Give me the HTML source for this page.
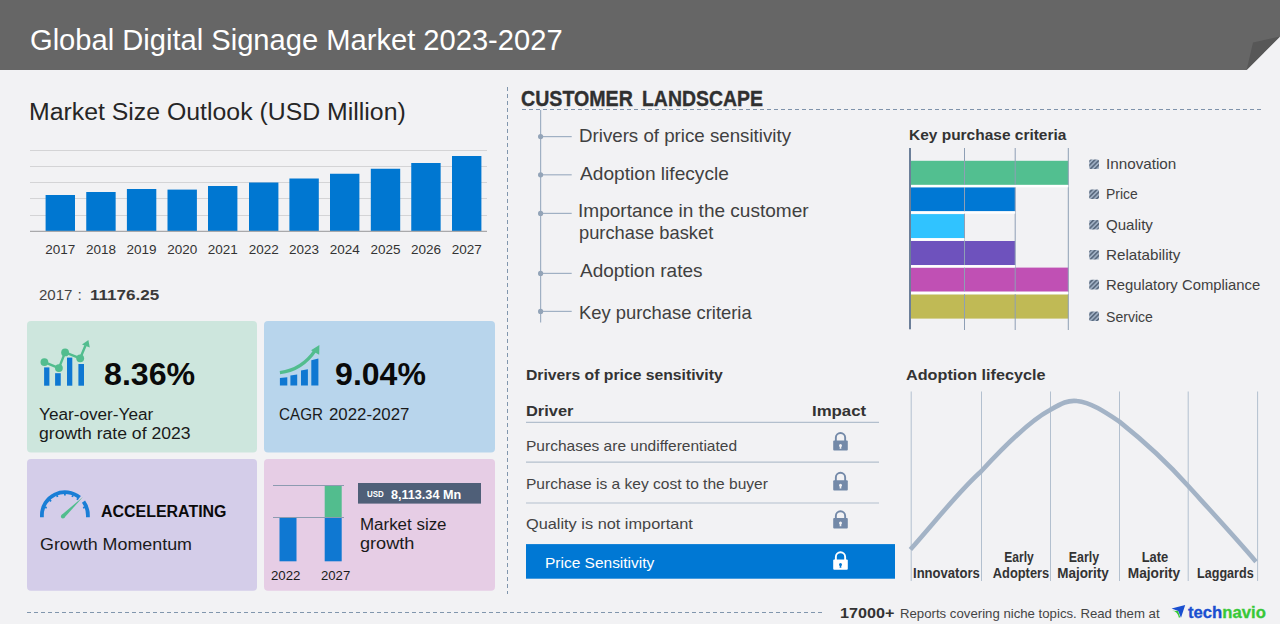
<!DOCTYPE html>
<html><head><meta charset="utf-8"><style>
html,body{margin:0;padding:0;}
body{width:1280px;height:624px;overflow:hidden;position:relative;background:#f2f2f4;font-family:"Liberation Sans",sans-serif;}
.t{position:absolute;white-space:nowrap;}
.a{position:absolute;}
</style></head><body>
<svg class="a" style="left:0;top:0" width="1280" height="624" viewBox="0 0 1280 624"><rect x="0" y="0" width="1280" height="70" fill="#666666"/>
<polygon points="1246.6,70 1280,36.5 1280,70" fill="#f2f2f4"/>
<polygon points="1246.6,70 1253,42.5 1280,36.5" fill="#575757"/>
<line x1="30" y1="150.5" x2="487" y2="150.5" stroke="#d4d4d6" stroke-width="1"/>
<line x1="30" y1="166.5" x2="487" y2="166.5" stroke="#d4d4d6" stroke-width="1"/>
<line x1="30" y1="182.5" x2="487" y2="182.5" stroke="#d4d4d6" stroke-width="1"/>
<line x1="30" y1="198.5" x2="487" y2="198.5" stroke="#d4d4d6" stroke-width="1"/>
<line x1="30" y1="215.5" x2="487" y2="215.5" stroke="#d4d4d6" stroke-width="1"/>
<rect x="45.6" y="195" width="29.4" height="36" fill="#0077d1"/>
<rect x="86.25" y="192" width="29.4" height="39" fill="#0077d1"/>
<rect x="126.9" y="189" width="29.4" height="42" fill="#0077d1"/>
<rect x="167.5" y="189.6" width="29.4" height="41.400000000000006" fill="#0077d1"/>
<rect x="208" y="186" width="29.4" height="45" fill="#0077d1"/>
<rect x="249" y="182.5" width="29.4" height="48.5" fill="#0077d1"/>
<rect x="289.4" y="178.5" width="29.4" height="52.5" fill="#0077d1"/>
<rect x="330" y="173.75" width="29.4" height="57.25" fill="#0077d1"/>
<rect x="370.8" y="168.75" width="29.4" height="62.25" fill="#0077d1"/>
<rect x="411.25" y="163" width="29.4" height="68" fill="#0077d1"/>
<rect x="452" y="156" width="29.4" height="75" fill="#0077d1"/>
<line x1="30" y1="231.3" x2="487" y2="231.3" stroke="#a9a9ab" stroke-width="1.2"/>
<rect x="27" y="321" width="230" height="131.6" rx="4" fill="#cde6dd"/>
<rect x="264" y="321" width="231" height="131.6" rx="4" fill="#b8d5ec"/>
<rect x="27" y="459" width="230" height="131.7" rx="4" fill="#d4cde9"/>
<rect x="264" y="459" width="231" height="131.7" rx="4" fill="#e6cde5"/>
<rect x="44.1" y="367.4" width="5.30" height="18.30" fill="#0f78d2"/>
<rect x="55.1" y="373.2" width="5.65" height="12.50" fill="#0f78d2"/>
<rect x="67" y="357.6" width="5.30" height="28.10" fill="#0f78d2"/>
<rect x="78.4" y="364" width="5.60" height="21.70" fill="#0f78d2"/>
<polyline points="44.4,362.1 58.9,368.1 65.1,352.4 80.2,358.3 85.5,345.5" fill="none" stroke="#52bd8e" stroke-width="2.4" stroke-linejoin="round"/>
<circle cx="44.4" cy="362.1" r="3.9" fill="#52bd8e"/>
<circle cx="58.9" cy="368.1" r="3.9" fill="#52bd8e"/>
<circle cx="65.1" cy="352.4" r="3.9" fill="#52bd8e"/>
<circle cx="80.2" cy="358.3" r="3.9" fill="#52bd8e"/>
<polygon points="88.4,340 89.8,347.5 82,344.6" fill="#52bd8e"/>
<polygon points="279.9,377.9 287.3,377.3 287.3,385.6 279.9,385.6" fill="#0f78d2"/>
<polygon points="290.4,375.6 297.2,374.5 297.2,385.6 290.4,385.6" fill="#0f78d2"/>
<polygon points="301,370.6 307.9,369.2 307.9,385.6 301,385.6" fill="#0f78d2"/>
<polygon points="311.3,360.2 318.4,358.4 318.4,385.6 311.3,385.6" fill="#0f78d2"/>
<path d="M279.9,372.6 Q302,370 315.5,350" fill="none" stroke="#52bd8e" stroke-width="3.2"/>
<polygon points="319.4,345 319.2,354.8 311,350.3" fill="#52bd8e"/>
<path d="M41.90,517.3 L41.90,515.20 A23.0,23.0 0 0 1 79.68,497.58" fill="none" stroke="#1a7ed6" stroke-width="3.8"/>
<path d="M83.51,501.68 A23.0,23.0 0 0 1 87.90,515.20 L87.90,517.3" fill="none" stroke="#1a7ed6" stroke-width="3.8"/>
<line x1="44.97" y1="507.15" x2="46.73" y2="507.86" stroke="#1a7ed6" stroke-width="1.8"/>
<line x1="49.70" y1="500.00" x2="51.04" y2="501.34" stroke="#1a7ed6" stroke-width="1.8"/>
<line x1="56.85" y1="495.27" x2="57.56" y2="497.03" stroke="#1a7ed6" stroke-width="1.8"/>
<line x1="64.90" y1="493.70" x2="64.90" y2="495.60" stroke="#1a7ed6" stroke-width="1.8"/>
<line x1="72.95" y1="495.27" x2="72.24" y2="497.03" stroke="#1a7ed6" stroke-width="1.8"/>
<line x1="78.14" y1="498.26" x2="76.97" y2="499.75" stroke="#1a7ed6" stroke-width="1.8"/>
<line x1="84.83" y1="507.15" x2="83.07" y2="507.86" stroke="#1a7ed6" stroke-width="1.8"/>
<path d="M64.29,517.84 L82.9,497.0 L61.51,514.96 Z" fill="#52bd8e"/>
<circle cx="62.9" cy="516.4" r="2.00" fill="#52bd8e"/>
<rect x="279.5" y="517.8" width="17" height="43.5" fill="#0f78d2"/>
<rect x="324.7" y="485.3" width="17" height="32.5" fill="#52bd8e"/>
<rect x="324.7" y="517.8" width="17" height="43.5" fill="#0f78d2"/>
<line x1="273" y1="485.5" x2="344" y2="485.5" stroke="#8c9bb0" stroke-width="1"/>
<line x1="273" y1="517.5" x2="344" y2="517.5" stroke="#8c9bb0" stroke-width="1"/>
<rect x="358" y="483" width="123" height="20.6" fill="#4f5f78"/>
<line x1="507.5" y1="87" x2="507.5" y2="594" stroke="#8196ad" stroke-width="1" stroke-dasharray="4,3"/>
<line x1="27" y1="612.5" x2="823" y2="612.5" stroke="#8196ad" stroke-width="1" stroke-dasharray="4,3"/>
<line x1="522" y1="109.5" x2="1262" y2="109.5" stroke="#7f93ab" stroke-width="1.2" stroke-dasharray="4,3"/>
<line x1="540.6" y1="110" x2="540.6" y2="322.6" stroke="#a0b0c3" stroke-width="1.2"/>
<line x1="540.6" y1="136.6" x2="571.7" y2="136.6" stroke="#a0b0c3" stroke-width="1.2"/>
<circle cx="540.6" cy="136.6" r="2.6" fill="#93a4b8"/>
<line x1="540.6" y1="174.8" x2="571.7" y2="174.8" stroke="#a0b0c3" stroke-width="1.2"/>
<circle cx="540.6" cy="174.8" r="2.6" fill="#93a4b8"/>
<line x1="540.6" y1="213.4" x2="571.7" y2="213.4" stroke="#a0b0c3" stroke-width="1.2"/>
<circle cx="540.6" cy="213.4" r="2.6" fill="#93a4b8"/>
<line x1="540.6" y1="273.4" x2="571.7" y2="273.4" stroke="#a0b0c3" stroke-width="1.2"/>
<circle cx="540.6" cy="273.4" r="2.6" fill="#93a4b8"/>
<line x1="540.6" y1="311.4" x2="571.7" y2="311.4" stroke="#a0b0c3" stroke-width="1.2"/>
<circle cx="540.6" cy="311.4" r="2.6" fill="#93a4b8"/>
<rect x="910" y="160.8" width="158.3" height="24.1" fill="#52bf90"/>
<rect x="910" y="187.2" width="105.2" height="24.1" fill="#0078d4"/>
<rect x="910" y="214.1" width="54.5" height="24.1" fill="#30c3ff"/>
<rect x="910" y="241" width="105.2" height="24.1" fill="#6e52bd"/>
<rect x="910" y="267.6" width="158.3" height="24.1" fill="#c050b4"/>
<rect x="910" y="294.5" width="158.3" height="24.1" fill="#c0ba55"/>
<line x1="964.5" y1="148" x2="964.5" y2="330" stroke="#8e9fb5" stroke-width="1"/>
<line x1="1015.2" y1="148" x2="1015.2" y2="330" stroke="#8e9fb5" stroke-width="1"/>
<line x1="1068.3" y1="148" x2="1068.3" y2="330" stroke="#8e9fb5" stroke-width="1"/>
<rect x="910" y="184.9" width="158.3" height="2.4" fill="#ffffff"/>
<rect x="910" y="211.3" width="105.2" height="2.4" fill="#ffffff"/>
<rect x="910" y="238.2" width="54.5" height="2.4" fill="#ffffff"/>
<rect x="910" y="265.1" width="105.2" height="2.4" fill="#ffffff"/>
<rect x="910" y="291.7" width="158.3" height="2.4" fill="#ffffff"/>
<rect x="909" y="148" width="2" height="181.3" fill="#6c7f99"/>
<defs><pattern id="hatch" patternUnits="userSpaceOnUse" width="3.2" height="3.2" patternTransform="rotate(45)"><rect width="3.2" height="3.2" fill="#a3b3c7"/><rect width="1.7" height="3.2" fill="#5b6b80"/></pattern></defs>
<rect x="1089.2" y="159.5" width="9.8" height="9.6" rx="1.5" fill="url(#hatch)"/>
<rect x="1089.2" y="189.5" width="9.8" height="9.6" rx="1.5" fill="url(#hatch)"/>
<rect x="1089.2" y="220" width="9.8" height="9.6" rx="1.5" fill="url(#hatch)"/>
<rect x="1089.2" y="250" width="9.8" height="9.6" rx="1.5" fill="url(#hatch)"/>
<rect x="1089.2" y="279.8" width="9.8" height="9.6" rx="1.5" fill="url(#hatch)"/>
<rect x="1089.2" y="311.5" width="9.8" height="9.6" rx="1.5" fill="url(#hatch)"/>
<line x1="526" y1="422.3" x2="879" y2="422.3" stroke="#b3bfcd" stroke-width="1.2"/>
<line x1="526" y1="462.2" x2="879" y2="462.2" stroke="#b3bfcd" stroke-width="1.2"/>
<line x1="526" y1="503" x2="879" y2="503" stroke="#b3bfcd" stroke-width="1.2"/>
<rect x="526" y="544.1" width="369" height="34.6" fill="#0078d4"/>
<path d="M835.85,441.4 V437.60 A4.65,4.65 0 0 1 845.15,437.60 V441.4" fill="none" stroke="#7389a8" stroke-width="1.9"/><rect x="833.20" y="440.4" width="14.6" height="10.1" rx="1" fill="#7389a8"/><circle cx="840.5" cy="445.40" r="1.5" fill="#f2f2f4"/><path d="M839.90,445.90 L839.60,448.70 L841.40,448.70 L841.10,445.90 Z" fill="#f2f2f4"/>
<path d="M835.85,481.2 V477.40 A4.65,4.65 0 0 1 845.15,477.40 V481.2" fill="none" stroke="#7389a8" stroke-width="1.9"/><rect x="833.20" y="480.2" width="14.6" height="10.4" rx="1" fill="#7389a8"/><circle cx="840.5" cy="485.20" r="1.5" fill="#f2f2f4"/><path d="M839.90,485.70 L839.60,488.50 L841.40,488.50 L841.10,485.70 Z" fill="#f2f2f4"/>
<path d="M835.85,519 V515.90 A4.65,4.65 0 0 1 845.15,515.90 V519" fill="none" stroke="#7389a8" stroke-width="1.9"/><rect x="833.20" y="518" width="14.6" height="10.4" rx="1" fill="#7389a8"/><circle cx="840.5" cy="523.00" r="1.5" fill="#f2f2f4"/><path d="M839.90,523.50 L839.60,526.30 L841.40,526.30 L841.10,523.50 Z" fill="#f2f2f4"/>
<path d="M835.85,560.4 V556.90 A4.65,4.65 0 0 1 845.15,556.90 V560.4" fill="none" stroke="#ffffff" stroke-width="1.9"/><rect x="833.20" y="559.4" width="14.6" height="10.4" rx="1" fill="#ffffff"/><circle cx="840.5" cy="564.40" r="1.5" fill="#0078d4"/><path d="M839.90,564.90 L839.60,567.70 L841.40,567.70 L841.10,564.90 Z" fill="#0078d4"/>
<line x1="911.2" y1="391.5" x2="911.2" y2="581" stroke="#b3c0cf" stroke-width="1"/>
<line x1="981.5" y1="391.5" x2="981.5" y2="581" stroke="#b3c0cf" stroke-width="1"/>
<line x1="1050.5" y1="391.5" x2="1050.5" y2="581" stroke="#b3c0cf" stroke-width="1"/>
<line x1="1119.5" y1="391.5" x2="1119.5" y2="581" stroke="#b3c0cf" stroke-width="1"/>
<line x1="1188.2" y1="391.5" x2="1188.2" y2="581" stroke="#b3c0cf" stroke-width="1"/>
<line x1="1257.6" y1="391.5" x2="1257.6" y2="581" stroke="#b3c0cf" stroke-width="1"/>
<path d="M910.4,549.6 C940,516 960,490 981,471.5 C1010,440 1035,418 1050,410 C1062,403 1068,400 1077,401 C1090,402 1105,412 1119.4,421.6 C1145,442 1165,460 1188,485.8 C1210,510 1235,537 1256,561.7" fill="none" stroke="#a3b3c6" stroke-width="4.6"/>
<path d="M1171.6,608.4 L1185.2,605.0 L1181.0,617.8 L1178.2,611.0 Z" fill="#1a4fd0"/>
<path d="M1172.0,610.8 Q1177.6,611.2 1178.9,617.8 L1180.2,617.2 L1178.0,610.9 Z" fill="#35c835"/></svg>
<div class="t" id="t0" style="left:30.00px;top:24.60px;font-size:30px;line-height:30px;font-weight:400;color:#ffffff;transform:scaleX(0.9707);transform-origin:0 50%;">Global Digital Signage Market 2023-2027</div>
<div class="t" id="t1" style="left:29.00px;top:100.80px;font-size:23.5px;line-height:23.5px;font-weight:400;color:#262626;transform:scaleX(1.0567);transform-origin:0 50%;">Market Size Outlook (USD Million)</div>
<div class="t" id="t2" style="left:60.30px;top:243.07px;font-size:13.5px;line-height:13.5px;font-weight:400;color:#333333;transform:translateX(-50%) scaleX(1.0000);transform-origin:50% 50%;">2017</div>
<div class="t" id="t3" style="left:100.95px;top:243.07px;font-size:13.5px;line-height:13.5px;font-weight:400;color:#333333;transform:translateX(-50%) scaleX(1.0000);transform-origin:50% 50%;">2018</div>
<div class="t" id="t4" style="left:141.60px;top:243.07px;font-size:13.5px;line-height:13.5px;font-weight:400;color:#333333;transform:translateX(-50%) scaleX(1.0000);transform-origin:50% 50%;">2019</div>
<div class="t" id="t5" style="left:182.20px;top:243.07px;font-size:13.5px;line-height:13.5px;font-weight:400;color:#333333;transform:translateX(-50%) scaleX(1.0000);transform-origin:50% 50%;">2020</div>
<div class="t" id="t6" style="left:222.70px;top:243.07px;font-size:13.5px;line-height:13.5px;font-weight:400;color:#333333;transform:translateX(-50%) scaleX(1.0000);transform-origin:50% 50%;">2021</div>
<div class="t" id="t7" style="left:263.70px;top:243.07px;font-size:13.5px;line-height:13.5px;font-weight:400;color:#333333;transform:translateX(-50%) scaleX(1.0000);transform-origin:50% 50%;">2022</div>
<div class="t" id="t8" style="left:304.10px;top:243.07px;font-size:13.5px;line-height:13.5px;font-weight:400;color:#333333;transform:translateX(-50%) scaleX(1.0000);transform-origin:50% 50%;">2023</div>
<div class="t" id="t9" style="left:344.70px;top:243.07px;font-size:13.5px;line-height:13.5px;font-weight:400;color:#333333;transform:translateX(-50%) scaleX(1.0000);transform-origin:50% 50%;">2024</div>
<div class="t" id="t10" style="left:385.50px;top:243.07px;font-size:13.5px;line-height:13.5px;font-weight:400;color:#333333;transform:translateX(-50%) scaleX(1.0000);transform-origin:50% 50%;">2025</div>
<div class="t" id="t11" style="left:425.95px;top:243.07px;font-size:13.5px;line-height:13.5px;font-weight:400;color:#333333;transform:translateX(-50%) scaleX(1.0000);transform-origin:50% 50%;">2026</div>
<div class="t" id="t12" style="left:466.70px;top:243.07px;font-size:13.5px;line-height:13.5px;font-weight:400;color:#333333;transform:translateX(-50%) scaleX(1.0000);transform-origin:50% 50%;">2027</div>
<div class="t" id="t13" style="left:39.20px;top:286.88px;font-size:15.5px;line-height:15.5px;font-weight:400;color:#444444;transform:scaleX(0.9715);transform-origin:0 50%;">2017</div>
<div class="t" id="t14" style="left:77.50px;top:286.88px;font-size:15.5px;line-height:15.5px;font-weight:400;color:#444444;">:</div>
<div class="t" id="t15" style="left:89.50px;top:286.88px;font-size:15.5px;line-height:15.5px;font-weight:700;color:#3a3a3a;transform:scaleX(1.1002);transform-origin:0 50%;">11176.25</div>
<div class="t" id="t16" style="left:104.00px;top:357.91px;font-size:32px;line-height:32px;font-weight:700;color:#0a0a0a;transform:scaleX(1.0046);transform-origin:0 50%;">8.36%</div>
<div class="t" id="t17" style="left:39.20px;top:407.45px;font-size:16px;line-height:16px;font-weight:400;color:#1a1a1a;transform:scaleX(1.0736);transform-origin:0 50%;">Year-over-Year</div>
<div class="t" id="t18" style="left:39.20px;top:425.75px;font-size:16px;line-height:16px;font-weight:400;color:#1a1a1a;transform:scaleX(1.0993);transform-origin:0 50%;">growth rate of 2023</div>
<div class="t" id="t19" style="left:335.10px;top:357.91px;font-size:32px;line-height:32px;font-weight:700;color:#0a0a0a;">9.04%</div>
<div class="t" id="t20" style="left:279.20px;top:407.45px;font-size:16px;line-height:16px;font-weight:400;color:#1a1a1a;transform:scaleX(0.9514);transform-origin:0 50%;">CAGR</div>
<div class="t" id="t21" style="left:329.20px;top:407.45px;font-size:16px;line-height:16px;font-weight:400;color:#1a1a1a;transform:scaleX(1.0503);transform-origin:0 50%;">2022-2027</div>
<div class="t" id="t22" style="left:100.50px;top:504.05px;font-size:16px;line-height:16px;font-weight:700;color:#0a0a0a;transform:scaleX(0.9968);transform-origin:0 50%;">ACCELERATING</div>
<div class="t" id="t23" style="left:39.80px;top:537.25px;font-size:16px;line-height:16px;font-weight:400;color:#1a1a1a;transform:scaleX(1.1171);transform-origin:0 50%;">Growth Momentum</div>
<div class="t" id="t24" style="left:271.10px;top:569.37px;font-size:13.5px;line-height:13.5px;font-weight:400;color:#1a1a1a;transform:scaleX(0.9800);transform-origin:0 50%;">2022</div>
<div class="t" id="t25" style="left:321.10px;top:569.37px;font-size:13.5px;line-height:13.5px;font-weight:400;color:#1a1a1a;transform:scaleX(0.9734);transform-origin:0 50%;">2027</div>
<div class="t" id="t26" style="left:367.10px;top:490.38px;font-size:9px;line-height:9px;font-weight:700;color:#ffffff;transform:scaleX(0.8828);transform-origin:0 50%;">USD</div>
<div class="t" id="t27" style="left:390.80px;top:488.72px;font-size:12.5px;line-height:12.5px;font-weight:700;color:#ffffff;transform:scaleX(1.0090);transform-origin:0 50%;">8,113.34 Mn</div>
<div class="t" id="t28" style="left:359.60px;top:517.45px;font-size:16px;line-height:16px;font-weight:400;color:#1a1a1a;transform:scaleX(1.0576);transform-origin:0 50%;">Market size</div>
<div class="t" id="t29" style="left:359.60px;top:535.75px;font-size:16px;line-height:16px;font-weight:400;color:#1a1a1a;transform:scaleX(1.1326);transform-origin:0 50%;">growth</div>
<div class="t" id="t30" style="left:521.25px;top:88.60px;font-size:21.5px;line-height:21.5px;font-weight:700;color:#303030;transform:scaleX(0.9118);transform-origin:0 50%;-webkit-text-stroke:0.35px #303030;">CUSTOMER</div>
<div class="t" id="t31" style="left:642.25px;top:88.60px;font-size:21.5px;line-height:21.5px;font-weight:700;color:#303030;transform:scaleX(0.9038);transform-origin:0 50%;-webkit-text-stroke:0.35px #303030;">LANDSCAPE</div>
<div class="t" id="t32" style="left:579.00px;top:125.91px;font-size:19px;line-height:19px;font-weight:400;color:#404040;transform:scaleX(0.9842);transform-origin:0 50%;">Drivers of price sensitivity</div>
<div class="t" id="t33" style="left:580.00px;top:164.11px;font-size:19px;line-height:19px;font-weight:400;color:#404040;transform:scaleX(1.0068);transform-origin:0 50%;">Adoption lifecycle</div>
<div class="t" id="t34" style="left:578.00px;top:201.31px;font-size:19px;line-height:19px;font-weight:400;color:#404040;transform:scaleX(1.0018);transform-origin:0 50%;">Importance in the customer</div>
<div class="t" id="t35" style="left:579.00px;top:223.11px;font-size:19px;line-height:19px;font-weight:400;color:#404040;transform:scaleX(0.9627);transform-origin:0 50%;">purchase basket</div>
<div class="t" id="t36" style="left:580.00px;top:261.11px;font-size:19px;line-height:19px;font-weight:400;color:#404040;">Adoption rates</div>
<div class="t" id="t37" style="left:579.00px;top:303.01px;font-size:19px;line-height:19px;font-weight:400;color:#404040;transform:scaleX(0.9674);transform-origin:0 50%;">Key purchase criteria</div>
<div class="t" id="t38" style="left:908.90px;top:126.58px;font-size:15.5px;line-height:15.5px;font-weight:700;color:#333333;transform:scaleX(0.9983);transform-origin:0 50%;">Key purchase criteria</div>
<div class="t" id="t39" style="left:1105.50px;top:156.30px;font-size:15px;line-height:15px;font-weight:400;color:#404040;transform:scaleX(1.0151);transform-origin:0 50%;">Innovation</div>
<div class="t" id="t40" style="left:1105.50px;top:186.30px;font-size:15px;line-height:15px;font-weight:400;color:#404040;transform:scaleX(0.9260);transform-origin:0 50%;">Price</div>
<div class="t" id="t41" style="left:1105.50px;top:216.90px;font-size:15px;line-height:15px;font-weight:400;color:#404040;transform:scaleX(1.0045);transform-origin:0 50%;">Quality</div>
<div class="t" id="t42" style="left:1105.50px;top:246.90px;font-size:15px;line-height:15px;font-weight:400;color:#404040;transform:scaleX(1.0139);transform-origin:0 50%;">Relatability</div>
<div class="t" id="t43" style="left:1105.50px;top:277.10px;font-size:15px;line-height:15px;font-weight:400;color:#404040;transform:scaleX(0.9896);transform-origin:0 50%;">Regulatory Compliance</div>
<div class="t" id="t44" style="left:1105.50px;top:308.90px;font-size:15px;line-height:15px;font-weight:400;color:#404040;transform:scaleX(0.9378);transform-origin:0 50%;">Service</div>
<div class="t" id="t45" style="left:525.90px;top:367.00px;font-size:15px;line-height:15px;font-weight:700;color:#333333;transform:scaleX(1.0484);transform-origin:0 50%;">Drivers of price sensitivity</div>
<div class="t" id="t46" style="left:525.90px;top:403.10px;font-size:15px;line-height:15px;font-weight:700;color:#333333;transform:scaleX(1.0935);transform-origin:0 50%;">Driver</div>
<div class="t" id="t47" style="left:811.90px;top:403.10px;font-size:15px;line-height:15px;font-weight:700;color:#333333;transform:scaleX(1.1197);transform-origin:0 50%;">Impact</div>
<div class="t" id="t48" style="left:525.90px;top:438.20px;font-size:15px;line-height:15px;font-weight:400;color:#444444;transform:scaleX(1.0344);transform-origin:0 50%;">Purchases are undifferentiated</div>
<div class="t" id="t49" style="left:525.90px;top:475.60px;font-size:15px;line-height:15px;font-weight:400;color:#444444;transform:scaleX(1.0363);transform-origin:0 50%;">Purchase is a key cost to the buyer</div>
<div class="t" id="t50" style="left:525.90px;top:516.30px;font-size:15px;line-height:15px;font-weight:400;color:#444444;transform:scaleX(1.0877);transform-origin:0 50%;">Quality is not important</div>
<div class="t" id="t51" style="left:544.80px;top:555.48px;font-size:15.5px;line-height:15.5px;font-weight:400;color:#ffffff;transform:scaleX(0.9990);transform-origin:0 50%;">Price Sensitivity</div>
<div class="t" id="t52" style="left:905.50px;top:367.48px;font-size:15.5px;line-height:15.5px;font-weight:700;color:#333333;transform:scaleX(1.0451);transform-origin:0 50%;">Adoption lifecycle</div>
<div class="t" id="t53" style="left:913.40px;top:565.95px;font-size:14px;line-height:14px;font-weight:700;color:#333333;transform:scaleX(0.9336);transform-origin:0 50%;">Innovators</div>
<div class="t" id="t54" style="left:1019.40px;top:549.85px;font-size:14px;line-height:14px;font-weight:700;color:#333333;transform:translateX(-50%) scaleX(0.8600);transform-origin:50% 50%;">Early</div>
<div class="t" id="t55" style="left:1020.70px;top:565.65px;font-size:14px;line-height:14px;font-weight:700;color:#333333;transform:translateX(-50%) scaleX(0.9158);transform-origin:50% 50%;">Adopters</div>
<div class="t" id="t56" style="left:1083.50px;top:549.85px;font-size:14px;line-height:14px;font-weight:700;color:#333333;transform:translateX(-50%) scaleX(0.8835);transform-origin:50% 50%;">Early</div>
<div class="t" id="t57" style="left:1083.40px;top:565.65px;font-size:14px;line-height:14px;font-weight:700;color:#333333;transform:translateX(-50%) scaleX(0.9623);transform-origin:50% 50%;">Majority</div>
<div class="t" id="t58" style="left:1154.50px;top:549.85px;font-size:14px;line-height:14px;font-weight:700;color:#333333;transform:translateX(-50%) scaleX(0.9256);transform-origin:50% 50%;">Late</div>
<div class="t" id="t59" style="left:1154.20px;top:565.65px;font-size:14px;line-height:14px;font-weight:700;color:#333333;transform:translateX(-50%) scaleX(0.9776);transform-origin:50% 50%;">Majority</div>
<div class="t" id="t60" style="left:1196.90px;top:565.95px;font-size:14px;line-height:14px;font-weight:700;color:#333333;transform:scaleX(0.8995);transform-origin:0 50%;">Laggards</div>
<div class="t" id="t61" style="left:840.40px;top:605.10px;font-size:15px;line-height:15px;font-weight:700;color:#333333;transform:scaleX(1.0778);transform-origin:0 50%;">17000+</div>
<div class="t" id="t62" style="left:900.10px;top:606.79px;font-size:13px;line-height:13px;font-weight:400;color:#444444;transform:scaleX(1.0149);transform-origin:0 50%;">Reports covering niche topics. Read them at</div>
<div class="t" id="t63" style="left:1188.40px;top:603.83px;font-size:16.5px;line-height:16.5px;font-weight:700;color:#1a4fd0;transform:scaleX(1.0105);transform-origin:0 50%;-webkit-text-stroke:0.3px currentColor;">tech<span style="color:#38c838">navio</span></div>
</body></html>
